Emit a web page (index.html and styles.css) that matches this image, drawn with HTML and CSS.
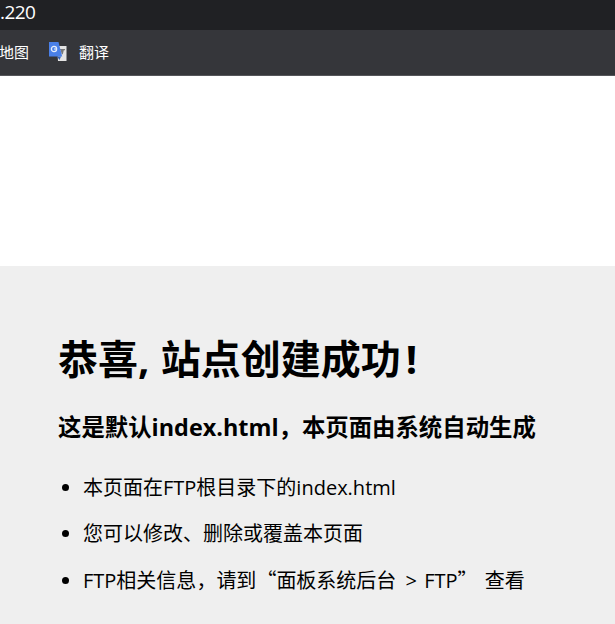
FILE: index.html
```html
<!DOCTYPE html>
<html lang="zh-CN">
<head>
<meta charset="utf-8">
<title>恭喜,站点创建成功!</title>
<link rel="stylesheet" href="styles.css">
</head>
<body>
<header class="browser">
  <div class="address"><span class="address-text">.220</span></div>
  <div class="bookmarks">
    <span class="bookmark bookmark-map">地图</span>
    <span class="bookmark bookmark-translate">
      <svg class="translate-icon" width="20" height="20" viewBox="0 0 20 20" aria-hidden="true">
        <path d="M9 4h9.500v15H10z" fill="#e4e4e4"/>
        <path d="M12 7h5v1.200h-1.200l-1 4h-1.100l-1-4H12z" fill="#777"/>
        <path d="M1 0h9.500l3.700 14.500H1z" fill="#4a80e8"/>
        <path d="M9 14.500l2.500 3.500 1.500-3.500z" fill="#3562b8"/>
        <circle cx="6" cy="7" r="2.600" fill="none" stroke="#e6eefc" stroke-width="1.300"/>
        <path d="M6 7h3" stroke="#e6eefc" stroke-width="1.100"/>
      </svg>
      <span>翻译</span>
    </span>
  </div>
</header>
<div class="blank"></div>
<main class="content">
  <h1 class="title">恭喜<span class="comma">,</span> 站点创建成功<span class="bang">!</span></h1>
  <h3 class="subtitle">这是默认index.html<span class="cjk">&#xFF0C;</span>本页面由系统自动生成</h3>
  <ul class="notes">
    <li>本页面在FTP根目录下的index.html</li>
    <li>您可以修改、删除或覆盖本页面</li>
    <li>FTP相关信息<span class="cjk">&#xFF0C;</span>请到<span class="cjk">“</span>面板系统后台 <span class="gt">&gt;</span> FTP<span class="cjk close-quote">”</span> 查看</li>
  </ul>
</main>
</body>
</html>
```
FILE: styles.css
```css
* { box-sizing: border-box; }
html, body { margin: 0; padding: 0; }
body {
  width: 615px;
  height: 624px;
  overflow: hidden;
  background: #fff;
  color: #000;
  font-family: "Open Sans", "Noto Sans CJK SC", sans-serif;
}
.browser { height: 76px; display: flex; flex-direction: column; }
.address {
  height: 30px;
  background: #202124;
  color: #fff;
  font-size: 19px;
  line-height: 24px;
  letter-spacing: -0.6px;
  overflow: hidden;
}
.address-text { display: block; }
.bookmarks {
  height: 46px;
  background: #35363a;
  border-bottom: 1px solid #55565a;
  color: #fff;
  font-size: 15px;
  display: flex;
  align-items: center;
  gap: 19px;
  padding-bottom: 2px;
}
.bookmark { display: flex; align-items: center; }
.translate-icon { margin-right: 11px; flex: none; }
.bookmark-map { margin-left: -1px; }
.blank { height: 190px; background: #fff; }
.content {
  height: 358px;
  background: #efefef;
  padding: 63px 0 0 58px;
}
.title {
  margin: 0;
  font-size: 40px;
  line-height: 60px;
  font-weight: 700;
}
.comma { margin-right: 1px; }
.bang { margin-left: 5px; }
.cjk { font-family: "Noto Sans CJK SC", sans-serif; }
.gt { margin: 0 2px 0 4px; }
.close-quote { margin-right: 2px; }
.subtitle {
  margin: 19px 0 0;
  font-size: 23.4px;
  line-height: 36px;
  font-weight: 700;
}
.notes {
  margin: 28px 0 0;
  padding: 0 0 0 25px;
  font-size: 20px;
}
.notes li { line-height: 30px; margin-bottom: 16px; }
```
